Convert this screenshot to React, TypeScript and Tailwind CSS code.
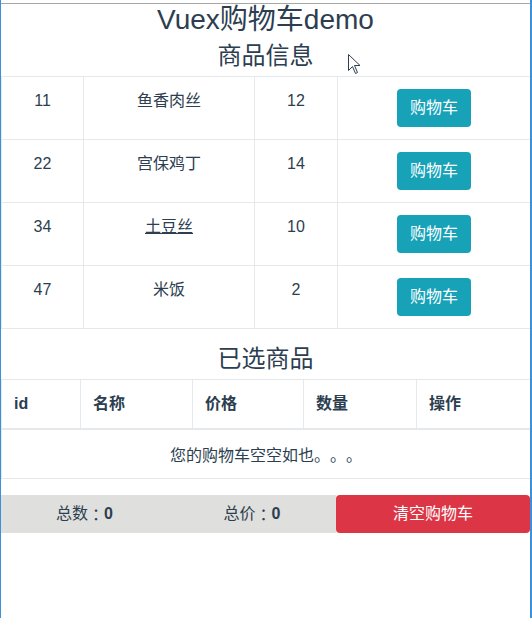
import React from "react";

const goods = [
  { id: 11, name: "鱼香肉丝", price: 12 },
  { id: 22, name: "宫保鸡丁", price: 14 },
  { id: 34, name: "土豆丝", price: 10, hover: true },
  { id: 47, name: "米饭", price: 2 },
];

function Colon() {
  return <span style={{ fontFamily: '"Noto Sans CJK TC", sans-serif' }}>：</span>;
}

export default function App() {
  return (
    <div
      className="relative flex w-[532px] h-[618px] bg-white text-[#2c3e50] [text-spacing-trim:space-all]"
      style={{ fontFamily: '"Liberation Sans", "Noto Sans CJK SC", sans-serif' }}
    >
      <div className="w-px bg-[#3d8fd9]" />
      <div className="w-[529px] flex flex-col">
        <div className="h-[3px]" />
        <div className="h-px bg-[#a6a6a6]" />
        <h1 className="text-center text-[28px] leading-[32px] font-normal">Vuex购物车demo</h1>
        <h2 className="text-center text-[24px] leading-[32px] font-normal mt-[4px] mb-[4px]">商品信息</h2>
        <table className="w-[529px] table-fixed border-collapse text-[16px] leading-[24px]">
          <colgroup>
            <col className="w-[82px]" />
            <col className="w-[171px]" />
            <col className="w-[83px]" />
            <col className="w-[193px]" />
          </colgroup>
          <tbody>
            {goods.map((g) => (
              <tr key={g.id}>
                <td className="border border-[#e6e9ec] p-3 align-top text-center">{g.id}</td>
                <td className="border border-[#e6e9ec] p-3 align-top text-center">
                  <span className={g.hover ? "underline" : ""}>{g.name}</span>
                </td>
                <td className="border border-[#e6e9ec] p-3 align-top text-center">{g.price}</td>
                <td className="border border-[#e6e9ec] p-3 align-top text-center">
                  <button className="h-[38px] w-[74px] rounded-[4px] bg-[#17a2b8] text-white text-[16px] leading-[24px]">
                    购物车
                  </button>
                </td>
              </tr>
            ))}
          </tbody>
        </table>
        <h2 className="text-center text-[24px] leading-[32px] font-normal mt-[14px] mb-[4px]">已选商品</h2>
        <table className="w-[529px] table-fixed border-collapse text-[16px] leading-[24px]">
          <colgroup>
            <col className="w-[79px]" />
            <col className="w-[112px]" />
            <col className="w-[111px]" />
            <col className="w-[113px]" />
            <col className="w-[114px]" />
          </colgroup>
          <thead>
            <tr>
              {["id", "名称", "价格", "数量", "操作"].map((h) => (
                <th
                  key={h}
                  className="border border-[#e6e9ec] border-b-2 p-3 text-left font-bold align-bottom"
                >
                  {h}
                </th>
              ))}
            </tr>
          </thead>
          <tbody>
            <tr>
              <td colSpan={5} className="border border-[#e6e9ec] pt-[14px] pb-[10px] px-3 text-center">
                您的购物车空空如也。。。
              </td>
            </tr>
          </tbody>
        </table>
        <div className="mt-[16px] flex h-[38px] text-[16px] leading-[24px]">
          <div className="w-[167px] bg-[#dfdfdd] flex items-center justify-center">
            总数<Colon /><b>0</b>
          </div>
          <div className="w-[168px] bg-[#dfdfdd] flex items-center justify-center">
            总价<Colon /><b>0</b>
          </div>
          <button className="flex-1 rounded-[4px] bg-[#dc3545] text-white text-[16px]">清空购物车</button>
        </div>
      </div>
      <div className="w-[2px] bg-[#3d8fd9]" />
      <svg
        className="absolute left-[348px] top-[54px]"
        width="14"
        height="21"
        viewBox="0 0 14 21"
      >
        <path
          d="M0.5 0.5 L0.5 16.5 L4.5 12.5 L7.5 19.5 L9.5 18.5 L6.5 11.5 L12 11.5 Z"
          fill="white"
          stroke="#2c3e50"
          strokeWidth="1"
          strokeLinejoin="round"
        />
      </svg>
    </div>
  );
}
